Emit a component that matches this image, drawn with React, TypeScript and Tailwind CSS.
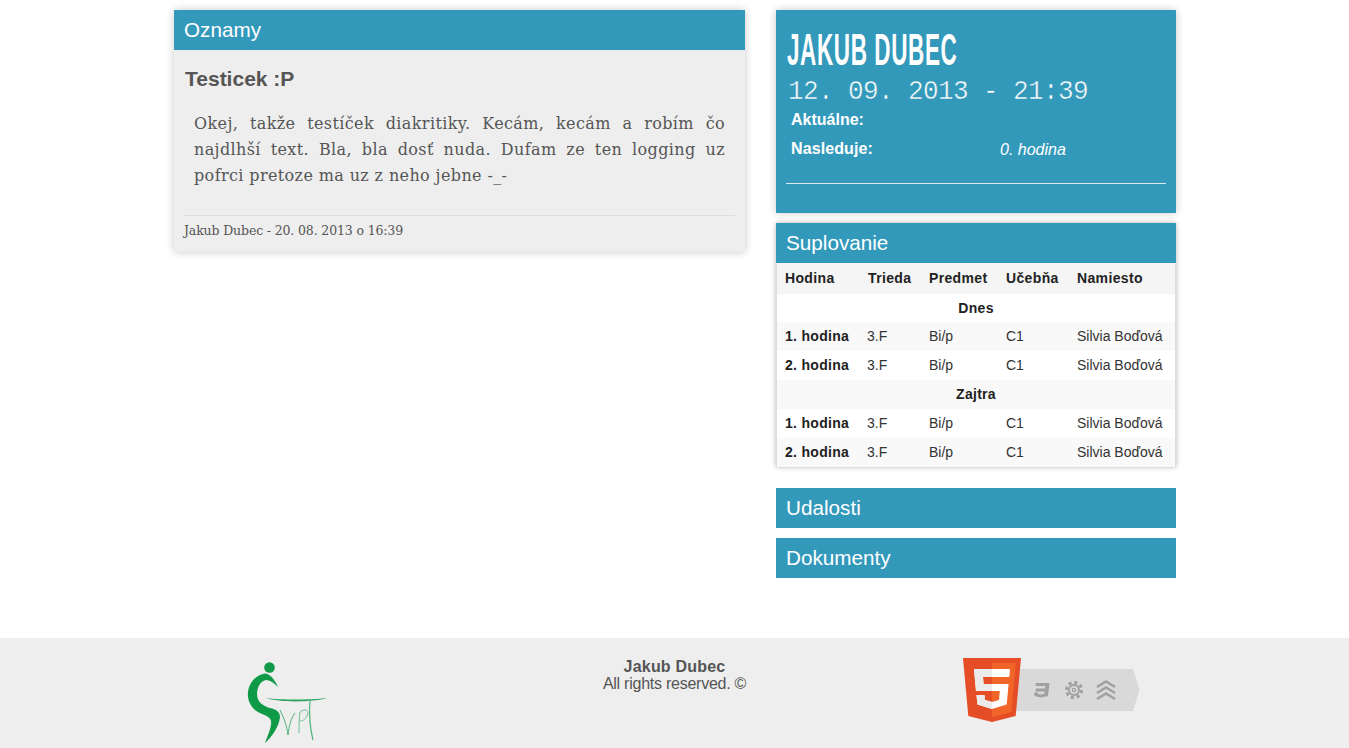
import React from "react";

const sans = "font-['Liberation_Sans',Arial,sans-serif]";

function Head({ children }: { children: React.ReactNode }) {
  return (
    <div className="h-10 bg-[#3399bb] pl-[10px] text-[20.7px] leading-10 text-white">{children}</div>
  );
}

function Row({ h, striped }: { h: string; striped: boolean }) {
  return (
    <tr className={`h-[29px] ${striped ? "bg-[#f9f9f9]" : "bg-white"}`}>
      <td className="pl-2 font-bold tracking-[0.3px] text-[#222]">{h}</td>
      <td className="pl-[7px]">3.F</td>
      <td className="pl-2">Bi/p</td>
      <td className="pl-2">C1</td>
      <td className="pl-2">Silvia Boďová</td>
    </tr>
  );
}

function Logo() {
  return (
    <svg width="110" height="98" viewBox="0 0 110 98" className="block">
      <circle cx="39.5" cy="17.5" r="5.3" fill="#0f9a48" />
      <path d="M33 24 C38 22 44 28 48 37 C44 33 40 30 36 30 C30 31 27 38 27 44 C27 52 33 56 40 58 C46 59 50 62 50 67 C49 76 43 86 35 93 C38 85 42 76 41 71 C40 66 33 65 28 62 C21 58 17 50 18 42 C19 33 25 26 33 24 Z" fill="#0f9a48" />
      <path d="M36 48 C50 50 80 50 97 48 C85 52 50 53 36 48 Z" fill="#2aa55f" />
      <path d="M50 60 C54 68 57 76 58 85 C59 76 61 68 65 63" fill="none" stroke="#4fb47c" strokeWidth="1" />
      <path d="M69 83 C69 76 69 68 70 62 C75 58 80 60 77 66 C75 70 72 71 70 71" fill="none" stroke="#6cc092" strokeWidth="1" />
      <path d="M80 50 C79 62 80 78 83 90" fill="none" stroke="#4fb47c" strokeWidth="1.2" />
    </svg>
  );
}

function Html5() {
  return (
    <svg width="178" height="64" viewBox="0 0 178 64" className="block">
      <path d="M50 11 H170 L176.5 32 L170 53 H50 Z" fill="#d9d9d9" />
      <path d="M0 0 H58 L52.7 58 L29 64 L5.3 58 Z" fill="#e44d26" />
      <path d="M29 5 H52.8 L48.3 54 L29 59.2 Z" fill="#f16529" />
      <path d="M11 11 H47 L46.3 19 H20 L20.6 26 H45.6 L43.7 46.5 L29 51 L14.5 46.5 L13.5 37 H21.5 L22 42 L29 44 L36 42 L36.8 33 H13 Z" fill="#fff" />
      <path d="M11 11 H29 V19 H20 L20.6 26 H29 V33 H13 Z M13.5 37 H21.5 L22 42 L29 44 V51 L14.5 46.5 Z" fill="#ebebeb" />
      <path d="M72.5 25 H86.5 L85 38 L78 39.5 L71.5 38 L71.2 34.5 H75 L75.2 36 L78.3 36.5 L81.4 35.8 L81.7 33.5 H72.6 L73 30.5 H82 L82.3 28 H72.7 Z" fill="#a0a0a0" />
      <g transform="translate(111 32)" fill="none" stroke="#a0a0a0">
        <circle r="7.5" strokeWidth="3" strokeDasharray="3.2 2.69" />
        <circle r="5" strokeWidth="2" />
        <circle r="1.6" strokeWidth="1.4" />
      </g>
      <g fill="none" stroke="#a0a0a0" strokeWidth="2.6">
        <path d="M134 29 L143 23.5 L152 29" />
        <path d="M134 35 L143 29.5 L152 35" />
        <path d="M134 41 L143 35.5 L152 41" />
      </g>
    </svg>
  );
}

export default function App() {
  return (
    <div className={`${sans} flex min-h-[748px] flex-col bg-white text-[#222]`}>
      <main className="mx-auto flex h-[638px] w-[1003px] items-start gap-[31px] pt-[10px] pl-px">
        <section className="h-[242px] w-[571px] bg-[#eeeeee] shadow-[0_0_8px_rgba(0,0,0,0.22)]">
          <Head>Oznamy</Head>
          <h2 className="mt-[17px] ml-[11px] text-[21px] leading-6 font-bold text-[#555]">Testicek :P</h2>
          <p className="mt-[20px] mr-5 ml-5 font-['DejaVu_Serif',serif] text-[16px] leading-[26px] tracking-[0.38px] text-[#555] [text-align:justify]">
            <span className="block [text-align-last:justify]">Okej, takže testíček diakritiky. Kecám, kecám a robím čo</span>
            <span className="block [text-align-last:justify]">najdlhší text. Bla, bla dosť nuda. Dufam ze ten logging uz</span>
            <span className="block">pofrci pretoze ma uz z neho jebne -_-</span>
          </p>
          <div className="mx-[10px] mt-[26px] border-t border-[#dddddd] pt-[7px] font-['DejaVu_Serif',serif] text-[12.5px] leading-4 tracking-[-0.14px] text-[#555]">
            Jakub Dubec - 20. 08. 2013 o 16:39
          </div>
        </section>

        <aside className="flex w-[400px] flex-col">
          <section className="h-[203px] bg-[#3399bb] px-[10px] pt-[17px] text-white shadow-[0_0_8px_rgba(0,0,0,0.22)]">
            <div className="ml-px h-[46px] origin-left scale-x-[0.5] text-[45px] leading-[46px] font-bold tracking-[1.2px] whitespace-nowrap">JAKUB DUBEC</div>
            <div className="mt-[5px] h-6 origin-top scale-y-[1.08] pl-[2px] font-['Liberation_Mono',monospace] text-[26px] leading-6 font-normal tracking-[-0.6px] whitespace-nowrap [-webkit-text-stroke:0.5px_#3399bb]">12. 09. 2013 - 21:39</div>
            <div className="mt-[8px] h-[29px] pl-[5px] text-[16px] leading-5 font-bold">Aktuálne:</div>
            <div className="flex h-[28px] pl-[5px] text-[16px] leading-5">
              <span className="w-[209px] font-bold tracking-[0.1px]">Nasleduje:</span>
              <span className="mt-[1px] italic">0. hodina</span>
            </div>
            <div className="mt-[16px] border-t border-[#dfe8ec]" />
          </section>

          <section className="mt-[10px] bg-white shadow-[0_0_5px_rgba(0,0,0,0.3)]">
            <Head>Suplovanie</Head>
            <div className="h-[204px] border-x border-b border-[#dddddd]">
              <table className="w-full table-fixed border-collapse text-[14px] text-[#333]">
                <colgroup>
                  <col className="w-[83px]" />
                  <col className="w-[61px]" />
                  <col className="w-[77px]" />
                  <col className="w-[71px]" />
                  <col />
                </colgroup>
                <thead>
                  <tr className="h-[31px] bg-[#f5f5f5] text-left font-bold tracking-[0.35px] text-[#222]">
                    <th className="pl-2">Hodina</th>
                    <th className="pl-2">Trieda</th>
                    <th className="pl-2">Predmet</th>
                    <th className="pl-2">Učebňa</th>
                    <th className="pl-2">Namiesto</th>
                  </tr>
                </thead>
                <tbody>
                  <tr className="h-[28px] bg-white">
                    <td colSpan={5} className="text-center font-bold tracking-[0.3px] text-[#222]">Dnes</td>
                  </tr>
                  <Row h="1. hodina" striped />
                  <Row h="2. hodina" striped={false} />
                  <tr className="h-[29px] bg-[#f9f9f9]">
                    <td colSpan={5} className="text-center font-bold tracking-[0.3px] text-[#222]">Zajtra</td>
                  </tr>
                  <Row h="1. hodina" striped={false} />
                  <Row h="2. hodina" striped />
                </tbody>
              </table>
            </div>
          </section>

          <section className="mt-[21px]"><Head>Udalosti</Head></section>
          <section className="mt-[10px]"><Head>Dokumenty</Head></section>
        </aside>
      </main>

      <footer className="h-[110px] bg-[#eeeeee] text-[#555]">
        <div className="mx-auto grid w-[1003px] grid-cols-3">
          <div className="mt-3 ml-[57px]"><Logo /></div>
          <div className="pt-[20px] text-center text-[16px] leading-[17px]">
            <div className="font-bold tracking-[0.2px]">Jakub Dubec</div>
            <div className="tracking-[-0.25px]">All rights reserved. ©</div>
          </div>
          <div className="ml-[121px] pt-[20px]"><Html5 /></div>
        </div>
      </footer>
    </div>
  );
}
